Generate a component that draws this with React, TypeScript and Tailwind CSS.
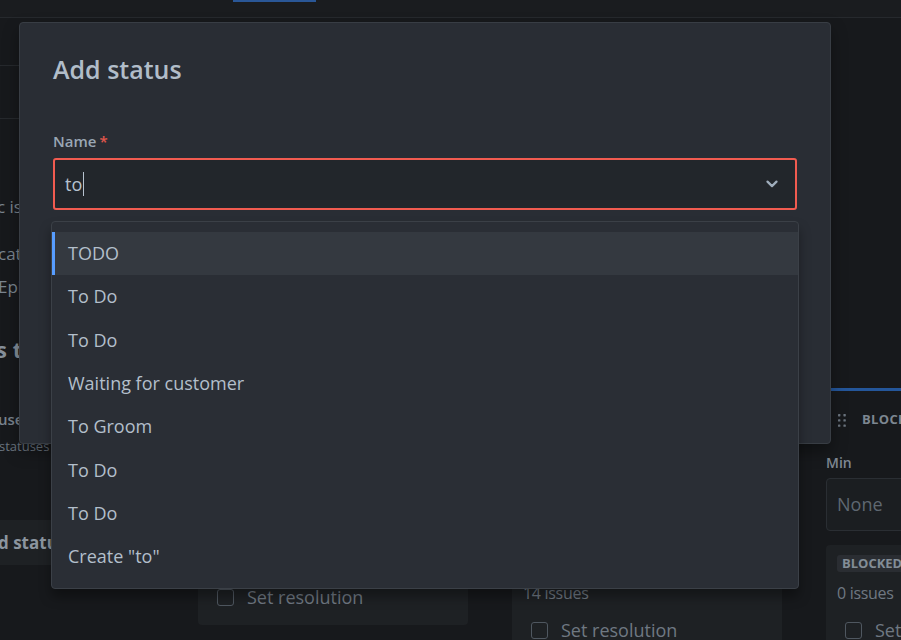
const options = ['TODO', 'To Do', 'To Do', 'Waiting for customer', 'To Groom', 'To Do', 'To Do', 'Create "to"'];

type Column = {
  name: string;
  count: string;
  lozenge?: string;
  limits: boolean;
  resolution: string;
};

const columns: Column[] = [
  { name: 'Unmapped', count: '3 issues', limits: false, resolution: 'Set resolution' },
  { name: 'To do', count: '14 issues', lozenge: 'TO DO', limits: true, resolution: 'Set resolution' },
  { name: 'Blocked', count: '0 issues', lozenge: 'BLOCKED', limits: true, resolution: 'Set resolution' },
];

function Grip() {
  return (
    <svg width="8" height="13" viewBox="0 0 8 13" className="shrink-0 fill-[#6b747e]">
      <rect x="0" y="0" width="2.4" height="2.4" rx="0.6" />
      <rect x="5.4" y="0" width="2.4" height="2.4" rx="0.6" />
      <rect x="0" y="5.2" width="2.4" height="2.4" rx="0.6" />
      <rect x="5.4" y="5.2" width="2.4" height="2.4" rx="0.6" />
      <rect x="0" y="10.4" width="2.4" height="2.4" rx="0.6" />
      <rect x="5.4" y="10.4" width="2.4" height="2.4" rx="0.6" />
    </svg>
  );
}

function BoardColumn({ col }: { col: Column }) {
  return (
    <div className="w-[300px] shrink-0 px-[15px]">
      <div className="h-[3px] rounded-full bg-[#24569a]" />
      <div className="mt-[9px] flex h-[40px] items-center gap-[16px] pl-[12px]">
        <Grip />
        <span className="text-[13px] font-bold tracking-wide text-[#7d8791] uppercase">{col.name}</span>
      </div>
      <div className="mt-[13px] text-[14px] leading-[20px] font-semibold text-[#7f8893]">Min</div>
      {col.limits && (
        <div className="mt-[5px] flex h-[53px] items-center rounded-[4px] border border-[#2a2e33] bg-[#1b1e21] px-[10px] text-[18px] text-[#5f6871]">
          None
        </div>
      )}
      <div className={`${col.limits ? 'mt-[14px]' : 'mt-[72px]'} rounded-[4px] bg-[#1e2124] px-[11px] pt-[10px] pb-[16px]`}>
        {col.lozenge && (
          <span className="block w-fit rounded-[3px] bg-[#2a2d32] px-[5px] text-[13px] leading-[17px] font-bold text-[#838d97]">
            {col.lozenge}
          </span>
        )}
        <div className={`${col.lozenge ? 'mt-[10px]' : ''} text-[16px] leading-[22px] tracking-[-0.3px] text-[#6f7882]`}>{col.count}</div>
        <label className={`${col.lozenge ? 'mt-[14px]' : 'mt-[8px]'} flex h-[24px] items-center gap-[13px] pl-[8px] text-[18px] text-[#6f7882]`}>
          <span className="h-[17px] w-[17px] shrink-0 rounded-[3px] border-[1.5px] border-[#4f5760]" />
          {col.resolution}
        </label>
      </div>
    </div>
  );
}

function Sidebar() {
  return (
    <aside className="w-[183px] shrink-0 overflow-hidden">
      <div className="h-[48px] border-b border-[#26292d]" />
      <div className="h-[53px] border-b border-[#26292d]" />
      <p className="-ml-[3px] mt-[76px] text-[17px] leading-[24px] whitespace-nowrap text-[#7a848e]">c issue types</p>
      <p className="-ml-[2px] mt-[18px] text-[17px] leading-[33px] whitespace-nowrap text-[#7a848e]">
        cation for these issue types
        <br />
        Epic, Story, Task
      </p>
      <h2 className="-ml-[4px] mt-[32px] text-[22px] leading-[28px] font-bold whitespace-nowrap text-[#858f99]">s to add</h2>
      <p className="-ml-[2px] mt-[46px] text-[15px] leading-[20px] font-semibold whitespace-nowrap text-[#7a848e]">uses</p>
      <p className="-ml-[1px] mt-[8px] text-[13px] leading-[18px] whitespace-nowrap text-[#6b7580]">statuses in use</p>
      <div className="mt-[65px] flex h-[45px] items-center bg-[#1e2124]">
        <span className="-ml-[2px] text-[17px] font-bold whitespace-nowrap text-[#8b959f]">d status</span>
      </div>
    </aside>
  );
}

export default function App() {
  return (
    <div className="relative h-[640px] w-[901px] overflow-hidden bg-[#17191c] font-['Open_Sans',sans-serif]">
      {/* top navigation */}
      <header className="h-[18px] border-b border-[#26292d] bg-[#1a1c1f]">
        <div className="ml-[233px] h-[2px] w-[83px] bg-[#2a5797]" />
      </header>

      <div className="flex">
        <Sidebar />
        <main className="flex gap-[14px] pt-[370px]">
          {columns.map((col) => (
            <BoardColumn key={col.name} col={col} />
          ))}
        </main>
      </div>

      {/* add status dialog */}
      <div className="absolute top-[22px] left-[19px] h-[422px] w-[812px] rounded-[4px] border border-[#383d44] bg-[#292d34] px-[33px] pt-[30px] shadow-[0_8px_16px_rgba(0,0,0,0.35)]">
        <h1 className="text-[25px] leading-[32px] font-semibold text-[#b1bdc9]">Add status</h1>

        <div className="mt-[46px] text-[15px] leading-[20px] font-semibold text-[#9aa7b4]">
          Name<span className="ml-[3px] text-[#e2574c]">*</span>
        </div>

        <div className="relative mt-[7px]">
          <div className="flex h-[52px] items-center rounded-[3px] border-2 border-[#f15b50] bg-[#22262b] pr-[17px] pl-[10px]">
            <span className="text-[18px] leading-[24px] text-[#b6c2cf]">to</span>
            <span className="ml-px h-[24px] w-px bg-[#b6c2cf]" />
            <svg width="12" height="8" viewBox="0 0 12 8" className="ml-auto">
              <path d="M1.5 1.6 6 6.1l4.5-4.5" fill="none" stroke="#9fadbc" strokeWidth="2.2" strokeLinecap="round" strokeLinejoin="round" />
            </svg>
          </div>

          {/* suggestions menu */}
          <ul className="absolute top-full -left-[2px] z-10 mt-[11px] h-[368px] w-[748px] rounded-[4px] border border-[#3b4047] bg-[#2a2e35] pt-[10px] shadow-[0_8px_12px_rgba(0,0,0,0.35)]">
            {options.map((opt, i) => (
              <li
                key={i}
                className={`relative flex h-[43.3px] items-center pl-[16px] text-[18px] text-[#b3bfcb] ${i === 0 ? 'bg-[#343940]' : ''}`}
              >
                {i === 0 && <span className="absolute top-0 bottom-0 left-0 w-[3px] bg-[#579dff]" />}
                {opt}
              </li>
            ))}
          </ul>
        </div>
      </div>
    </div>
  );
}
